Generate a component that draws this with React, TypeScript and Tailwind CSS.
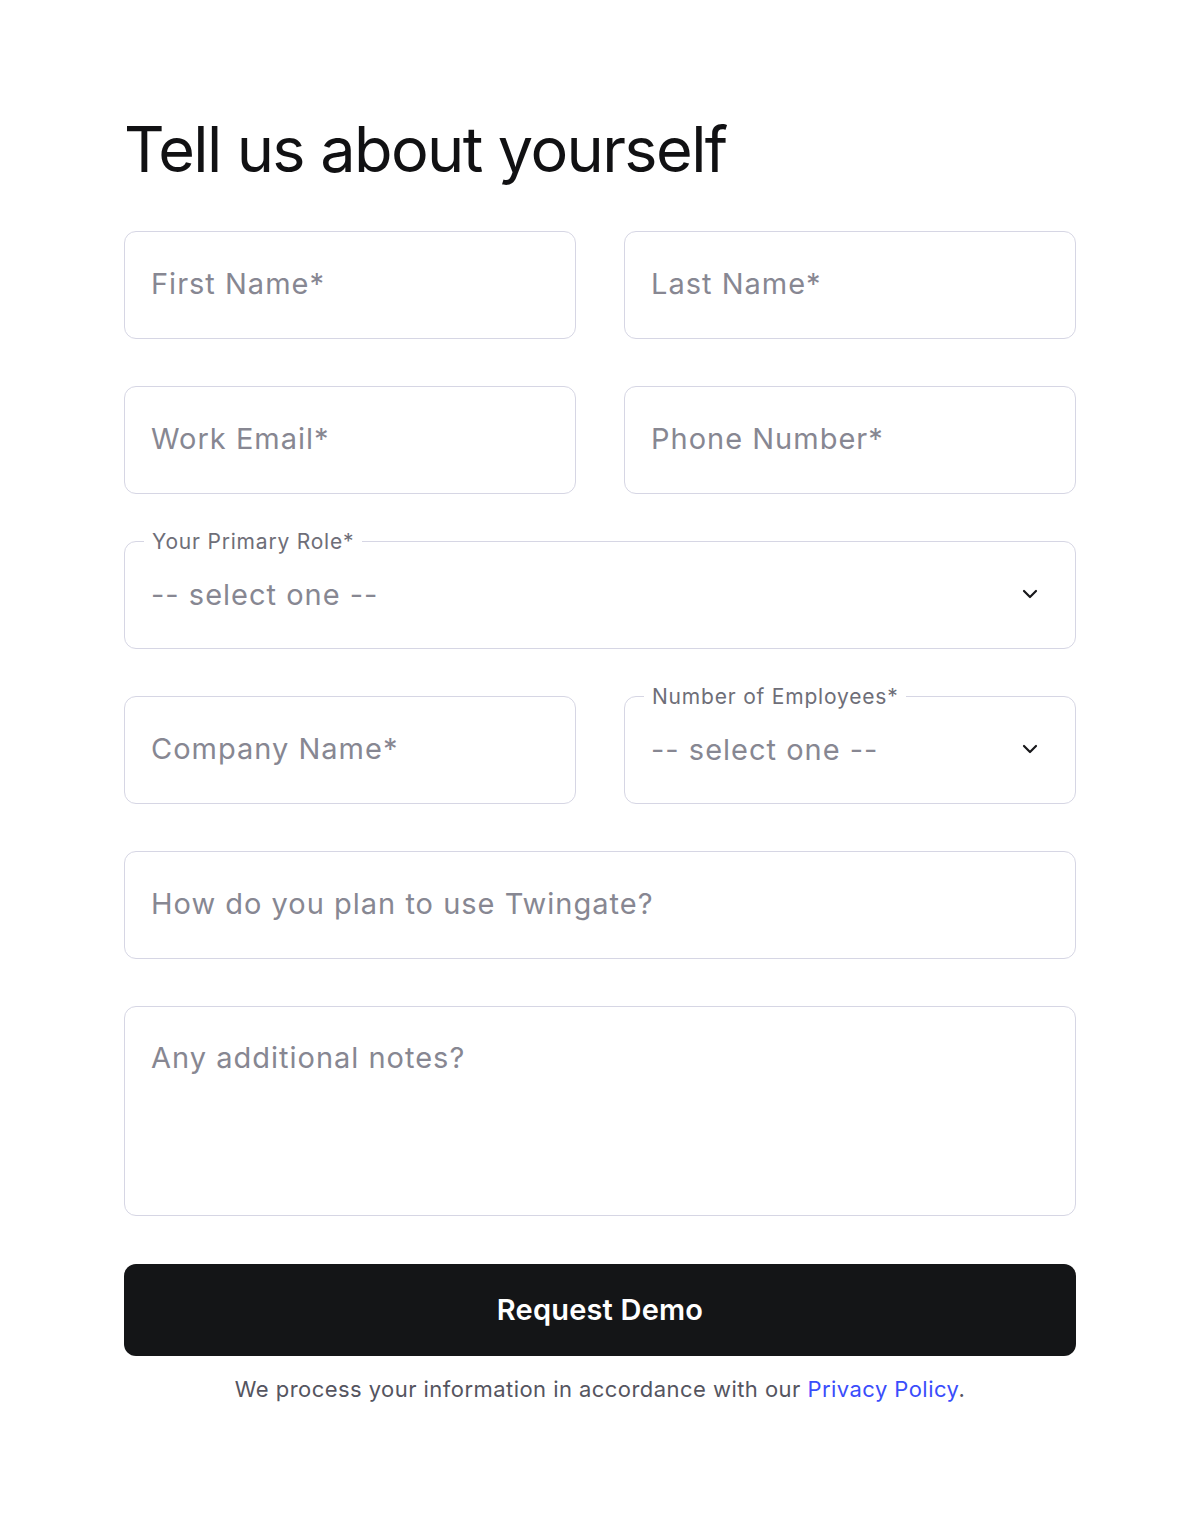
import React from 'react';
import { ChevronDown } from 'lucide-react';

const font = { fontFamily: 'Inter, "Noto Sans", sans-serif' };

function TextField({ placeholder }: { placeholder: string }) {
  return (
    <input
      type="text"
      placeholder={placeholder}
      className="h-[108px] w-full rounded-[12px] border border-[#d6d6e4] bg-white px-[26px] pb-[3px] text-[29px] tracking-[1px] text-[#18181b] placeholder:text-[#878792] outline-none"
    />
  );
}

function SelectField({ label }: { label: string }) {
  return (
    <div className="relative flex h-[108px] w-full items-center rounded-[12px] border border-[#d6d6e4] bg-white px-[26px]">
      <span className="absolute left-[19px] top-[-12px] bg-white px-[8px] text-[21px] leading-[24px] tracking-[0.8px] text-[#6e6e78]">
        {label}
      </span>
      <span className="flex-1 text-[29px] tracking-[1px] text-[#878792]">-- select one --</span>
      <ChevronDown size={24} strokeWidth={2.2} className="mr-[7px] mb-[3px] text-[#18181b]" />
    </div>
  );
}

export default function App() {
  return (
    <main className="min-h-[1527px] bg-white" style={font}>
      <div className="mx-auto w-[952px] pt-[110px]">
        <h1 className="text-[63px] leading-[78px] tracking-[-1.6px] text-[#111113]">
          Tell us about yourself
        </h1>

        <form className="mt-[43px] flex flex-col gap-[47px]">
          <div className="grid grid-cols-2 gap-[48px]">
            <TextField placeholder="First Name*" />
            <TextField placeholder="Last Name*" />
          </div>
          <div className="grid grid-cols-2 gap-[48px]">
            <TextField placeholder="Work Email*" />
            <TextField placeholder="Phone Number*" />
          </div>
          <SelectField label="Your Primary Role*" />
          <div className="grid grid-cols-2 gap-[48px]">
            <TextField placeholder="Company Name*" />
            <SelectField label="Number of Employees*" />
          </div>
          <TextField placeholder="How do you plan to use Twingate?" />
          <textarea
            placeholder="Any additional notes?"
            className="h-[210px] w-full resize-none rounded-[12px] border border-[#d6d6e4] bg-white px-[26px] pt-[33px] text-[29px] leading-[36px] tracking-[1px] text-[#18181b] placeholder:text-[#878792] outline-none"
          />
          <div className="flex flex-col items-center">
            <button
              type="button"
              className="mt-[1px] h-[92px] w-full rounded-[12px] bg-[#141517] text-[29px] font-semibold tracking-[0.2px] text-white"
            >
              Request Demo
            </button>
            <p className="mt-[17px] text-[22px] tracking-[0.45px] text-[#55555f]">
              We process your information in accordance with our{' '}
              <a href="#" className="text-[#3a4dfb]">
                Privacy Policy
              </a>
              .
            </p>
          </div>
        </form>
      </div>
    </main>
  );
}
